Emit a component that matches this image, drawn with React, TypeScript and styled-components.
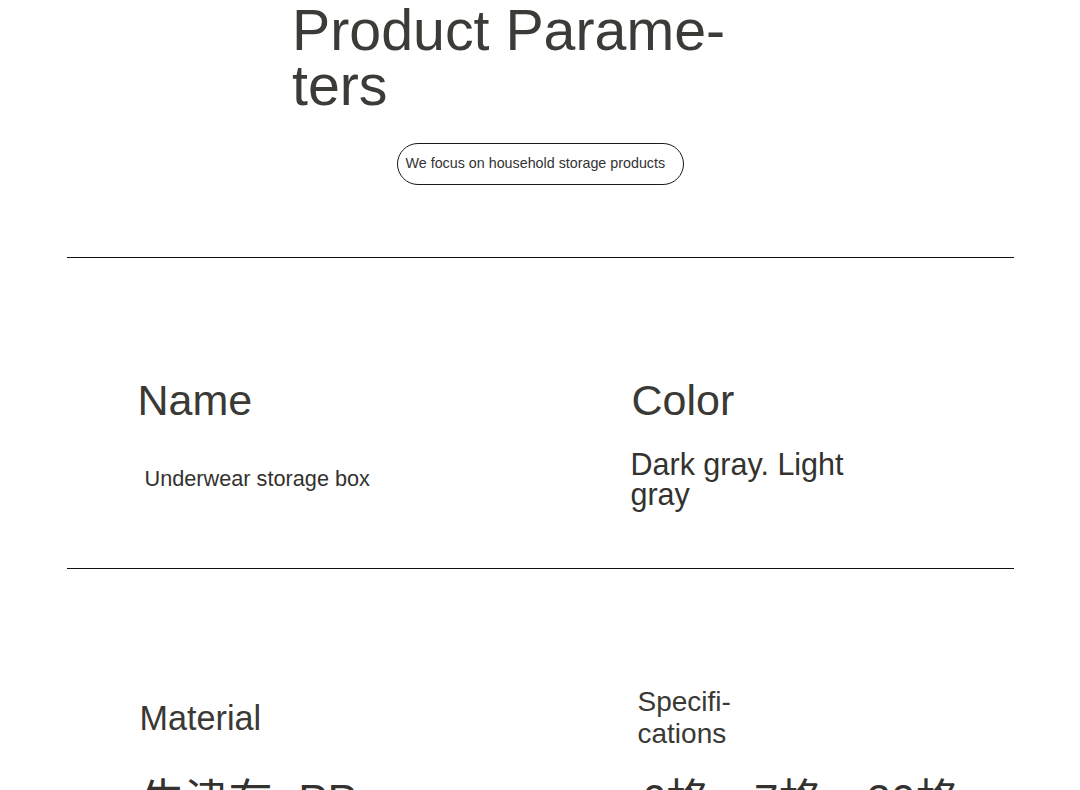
import React from "react";
import styled, { createGlobalStyle } from "styled-components";

const GlobalStyle = createGlobalStyle`
  html, body {
    margin: 0;
    padding: 0;
    background: #ffffff;
  }
  body {
    font-family: "Liberation Sans", Arial, "Noto Sans CJK SC", sans-serif;
    color: #3a3935;
  }
`;

const Page = styled.main`
  width: 947px;
  margin: 0 auto;
`;

const Header = styled.header`
  display: flex;
  flex-direction: column;
  align-items: center;
`;

const Title = styled.h1`
  width: 496px;
  margin: 3px 0 0;
  font-size: 57.3px;
  line-height: 55px;
  font-weight: 400;
  color: #3c3b37;
  hyphens: manual;
`;

const Pill = styled.div`
  box-sizing: border-box;
  width: 287px;
  height: 42px;
  margin-top: 30px;
  padding: 0 0 2px 8px;
  display: flex;
  align-items: center;
  border: 1px solid #1a1a1a;
  border-radius: 21px;
  font-size: 14.3px;
  color: #333333;
`;

const Divider = styled.div<{ $top: number }>`
  height: 1px;
  background: #111111;
  margin-top: ${(p) => p.$top}px;
`;

const ParamRow = styled.section<{ $top: number; $bottom: number; $gap: number }>`
  display: grid;
  grid-template-columns: 473px 474px;
  align-items: center;
  row-gap: ${(p) => p.$gap}px;
  padding: ${(p) => p.$top}px 0 ${(p) => p.$bottom}px;
`;

const Label = styled.h2<{ $size: number; $indent: number; $width?: number; $lh?: number }>`
  margin: 0 0 0 ${(p) => p.$indent}px;
  width: ${(p) => (p.$width ? `${p.$width}px` : "auto")};
  font-size: ${(p) => p.$size}px;
  line-height: ${(p) => (p.$lh ? `${p.$lh}px` : "1.15")};
  font-weight: 400;
  color: #3a3935;
  hyphens: manual;
`;

const Value = styled.p<{ $size: number; $indent: number; $width?: number; $lh?: number }>`
  margin: 0 0 0 ${(p) => p.$indent}px;
  width: ${(p) => (p.$width ? `${p.$width}px` : "auto")};
  font-size: ${(p) => p.$size}px;
  line-height: ${(p) => (p.$lh ? `${p.$lh}px` : "1.15")};
  font-weight: 400;
  color: #33322f;
`;

export default function App() {
  return (
    <>
      <GlobalStyle />
      <Page>
        <Header>
          <Title>{"Product Parame\u00ADters"}</Title>
          <Pill>We focus on household storage products</Pill>
        </Header>
        <Divider $top={72} />
        <ParamRow $top={118} $bottom={59} $gap={24}>
          <Label $size={43} $indent={71}>Name</Label>
          <Label $size={43} $indent={92}>Color</Label>
          <Value $size={21.7} $indent={78}>Underwear storage box</Value>
          <Value $size={30.5} $lh={30} $indent={91} $width={250}>
            Dark gray. Light gray
          </Value>
        </ParamRow>
        <Divider $top={0} />
        <ParamRow $top={117} $bottom={40} $gap={26}>
          <Label $size={34.2} $indent={73}>Material</Label>
          <Label $size={28} $lh={32} $indent={98} $width={120}>
            {"Specifi\u00ADcations"}
          </Label>
          <Value $size={44} $indent={74}>牛津布+PP</Value>
          <Value $size={44} $indent={102}>6格、7格、20格</Value>
        </ParamRow>
      </Page>
    </>
  );
}
